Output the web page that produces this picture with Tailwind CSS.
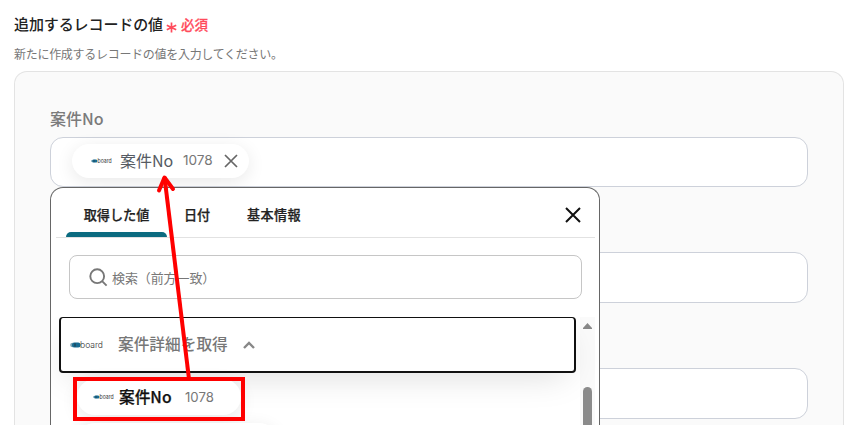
<!DOCTYPE html>
<html lang="ja">
<head>
<meta charset="utf-8">
<title>レコード作成</title>
<script src="https://cdn.jsdelivr.net/npm/@tailwindcss/browser@4"></script>
</head>
<body class="relative h-[425px] w-[856px] overflow-hidden bg-white font-['Noto_Sans_CJK_JP',sans-serif] text-[#222]">
<svg class="hidden">
  <symbol id="logo-mark" viewBox="0 0 11 8">
    <ellipse cx="3" cy="4" rx="2.8" ry="2.2" fill="#7fa5b5"/>
    <rect x="2" y="1.500" width="8.6" height="5" rx="2.500" fill="#176b91"/>
    <ellipse cx="5" cy="4" rx="1" ry="1.9" fill="#1d4d66"/>
  </symbol>
</svg>
<main class="px-[14px] pt-[12px]">
  <div class="flex h-6 items-center whitespace-nowrap">
    <h1 class="w-[149px] text-[15px] font-medium leading-6 tracking-[-0.1px]">追加するレコードの値</h1>
    <svg class="ml-[3px] mt-[6px] h-[11px] w-[11px]" viewBox="0 0 11 11" fill="none" stroke="#ff4b5c" stroke-width="1.7"><path d="M5.5 .5v10M.8 3.2l9.4 4.6M10.2 3.2L.8 7.8"/></svg>
    <span class="ml-[4px] mt-px text-[13.5px] font-medium text-[#ff4b5c] [-webkit-text-stroke:0.25px_#ff4b5c]">必須</span>
  </div>
  <p class="mt-[9px] h-[19px] whitespace-nowrap text-[12px] leading-[18px] tracking-[-0.29px] text-[#777]">新たに作成するレコードの値を入力してください。</p>
  <section class="mt-[7px] h-[354px] w-[830px] rounded-t-[13px] border border-b-0 border-[#e3e3e3] bg-[#fafafa] px-[35px] pt-[34px]">
    <h2 class="h-[31px] text-[16px] font-medium leading-[24px] text-[#7b7b7b]">案件No</h2>
    <div class="flex h-[50px] w-[758px] rounded-[13px] border border-[#cdd1da] bg-white pl-[21px] pt-[6px]">
      <div class="flex h-[34px] w-[177px] items-center rounded-full bg-white pl-[19px] shadow-[0_4px_18px_rgba(0,0,0,0.09)]">
        <svg class="h-[8px] w-[21px] overflow-visible" viewBox="0 0 34 12"><use href="#logo-mark" x="0" y="2" width="11" height="8"/><text x="10.500" y="9" font-family="Inter" font-size="9" textLength="23" lengthAdjust="spacingAndGlyphs" fill="#333">board</text></svg>
        <span class="-mt-[3px] ml-[8px] w-[54px] whitespace-nowrap text-[16px] leading-6 text-[#555b63]">案件No</span>
        <span class="-mt-px ml-[9px] w-[32px] font-[Inter] text-[13.6px] text-[#777]">1078</span>
        <svg class="ml-[9px] h-[14px] w-[14px]" viewBox="0 0 14 14" fill="none" stroke="#666" stroke-width="1.7"><path d="M1 1l12 12M13 1L1 13"/></svg>
      </div>
    </div>
    <div class="mt-[65px] h-[51px] w-[758px] rounded-[13px] border border-[#cdd1da] bg-white"></div>
    <div class="mt-[65px] h-[51px] w-[758px] rounded-[13px] border border-[#cdd1da] bg-white"></div>
  </section>
</main>

<div class="absolute left-[50px] top-[187px] h-[238px] w-[550px] overflow-hidden rounded-t-[13px] border border-b-0 border-[#666] bg-white">
  <div class="ml-[5px] flex h-[50px] w-[539px] items-stretch border-b border-[#e2e2e2] pl-[10px] text-[13.1px] font-medium text-[#222] [-webkit-text-stroke:0.25px_#222]">
    <div class="relative w-[101px] pt-[17px] text-center leading-5">取得した値<span class="absolute bottom-0 left-0 h-[5px] w-full rounded-t-[5px] bg-[#0b6b80]"></span></div>
    <div class="ml-[17px] w-[28px] whitespace-nowrap pt-[17px] leading-5">日付</div>
    <div class="ml-[35px] w-[60px] whitespace-nowrap pt-[17px] leading-5 tracking-[0.4px]">基本情報</div>
    <svg class="ml-auto mr-[14px] mt-[19px] h-[16px] w-[16px]" viewBox="0 0 16 16" fill="none" stroke="#111" stroke-width="2"><path d="M1 1l14 14M15 1L1 15"/></svg>
  </div>
  <div class="ml-[18px] mt-[17px] flex h-[44px] w-[513px] items-center rounded-[8px] border border-[#c6c6c6] pl-[19px]">
    <svg class="h-[19px] w-[19px]" viewBox="0 0 19 19" fill="none" stroke="#777" stroke-width="1.9"><circle cx="8.2" cy="8.2" r="6.9"/><path d="M13.1 13.1l4.500 4.500"/></svg>
    <span class="ml-[4px] mt-px whitespace-nowrap text-[13px] tracking-[-0.1px] text-[#777]">検索（前方一致）</span>
  </div>
  <div class="mt-[18px] flex h-[108px] overflow-hidden">
    <div class="ml-[8px] w-[517px]">
      <div class="relative flex h-[56px] items-center rounded-[4px] border-2 border-t border-[#111] bg-white pl-[9px] shadow-[0_12px_35px_-10px_rgba(0,0,0,0.15)]">
        <svg class="h-[12px] w-[34px] overflow-visible" viewBox="0 0 34 12"><use href="#logo-mark" x="0" y="2" width="11" height="8"/><text x="10" y="9" font-family="Inter" font-size="9" font-weight="300" textLength="23" lengthAdjust="spacingAndGlyphs" fill="#333">board</text></svg>
        <span class="-mt-[2px] ml-[14px] whitespace-nowrap text-[15.7px] font-medium text-[#777]">案件詳細を取得</span>
        <svg class="ml-[15px] h-[8px] w-[12px]" viewBox="0 0 12 8" fill="none" stroke="#888" stroke-width="2.4"><path d="M1 7l5-5 5 5"/></svg>
      </div>
      <div class="relative ml-[18px] mt-[6px] flex h-[36px] w-[164px] items-center rounded-full bg-white pl-[16px] shadow-[0_4px_18px_rgba(0,0,0,0.09)]">
        <svg class="h-[8px] w-[21px] overflow-visible" viewBox="0 0 34 12"><use href="#logo-mark" x="0" y="2" width="11" height="8"/><text x="10.500" y="9" font-family="Inter" font-size="9" textLength="23" lengthAdjust="spacingAndGlyphs" fill="#333">board</text></svg>
        <span class="ml-[5px] w-[54px] whitespace-nowrap text-[15.7px] font-medium text-[#111] [-webkit-text-stroke:0.25px_#111]">案件No</span>
        <span class="ml-[12px] mt-px font-[Inter] text-[13.2px] text-[#777]">1078</span>
      </div>
      <div class="relative ml-[18px] mt-[8px] h-[36px] w-[200px] rounded-full bg-white shadow-[0_4px_18px_rgba(0,0,0,0.09)]"></div>
    </div>
    <div class="ml-[4px] flex w-[15px] flex-col items-center bg-[#fafafa] pt-[6px]">
      <svg class="h-[6px] w-[9px] shrink-0" viewBox="0 0 9 6"><path d="M4.500 0L9 5v1H0V5z" fill="#888"/></svg>
      <div class="mt-[58px] h-[38px] w-[9px] shrink-0 rounded-t-full bg-[#8b8b8b]"></div>
    </div>
  </div>
</div>

<svg class="absolute left-0 top-0 h-[425px] w-[856px]" viewBox="0 0 856 425" fill="none" stroke="#f00">
  <rect x="75" y="379" width="168" height="40" stroke-width="4"/>
  <path d="M189 379L164.500 177" stroke-width="4"/>
  <path d="M159 190.500L164.500 177.500L173 189" stroke-width="4" stroke-linecap="round" stroke-linejoin="round"/>
</svg>
</body>
</html>
